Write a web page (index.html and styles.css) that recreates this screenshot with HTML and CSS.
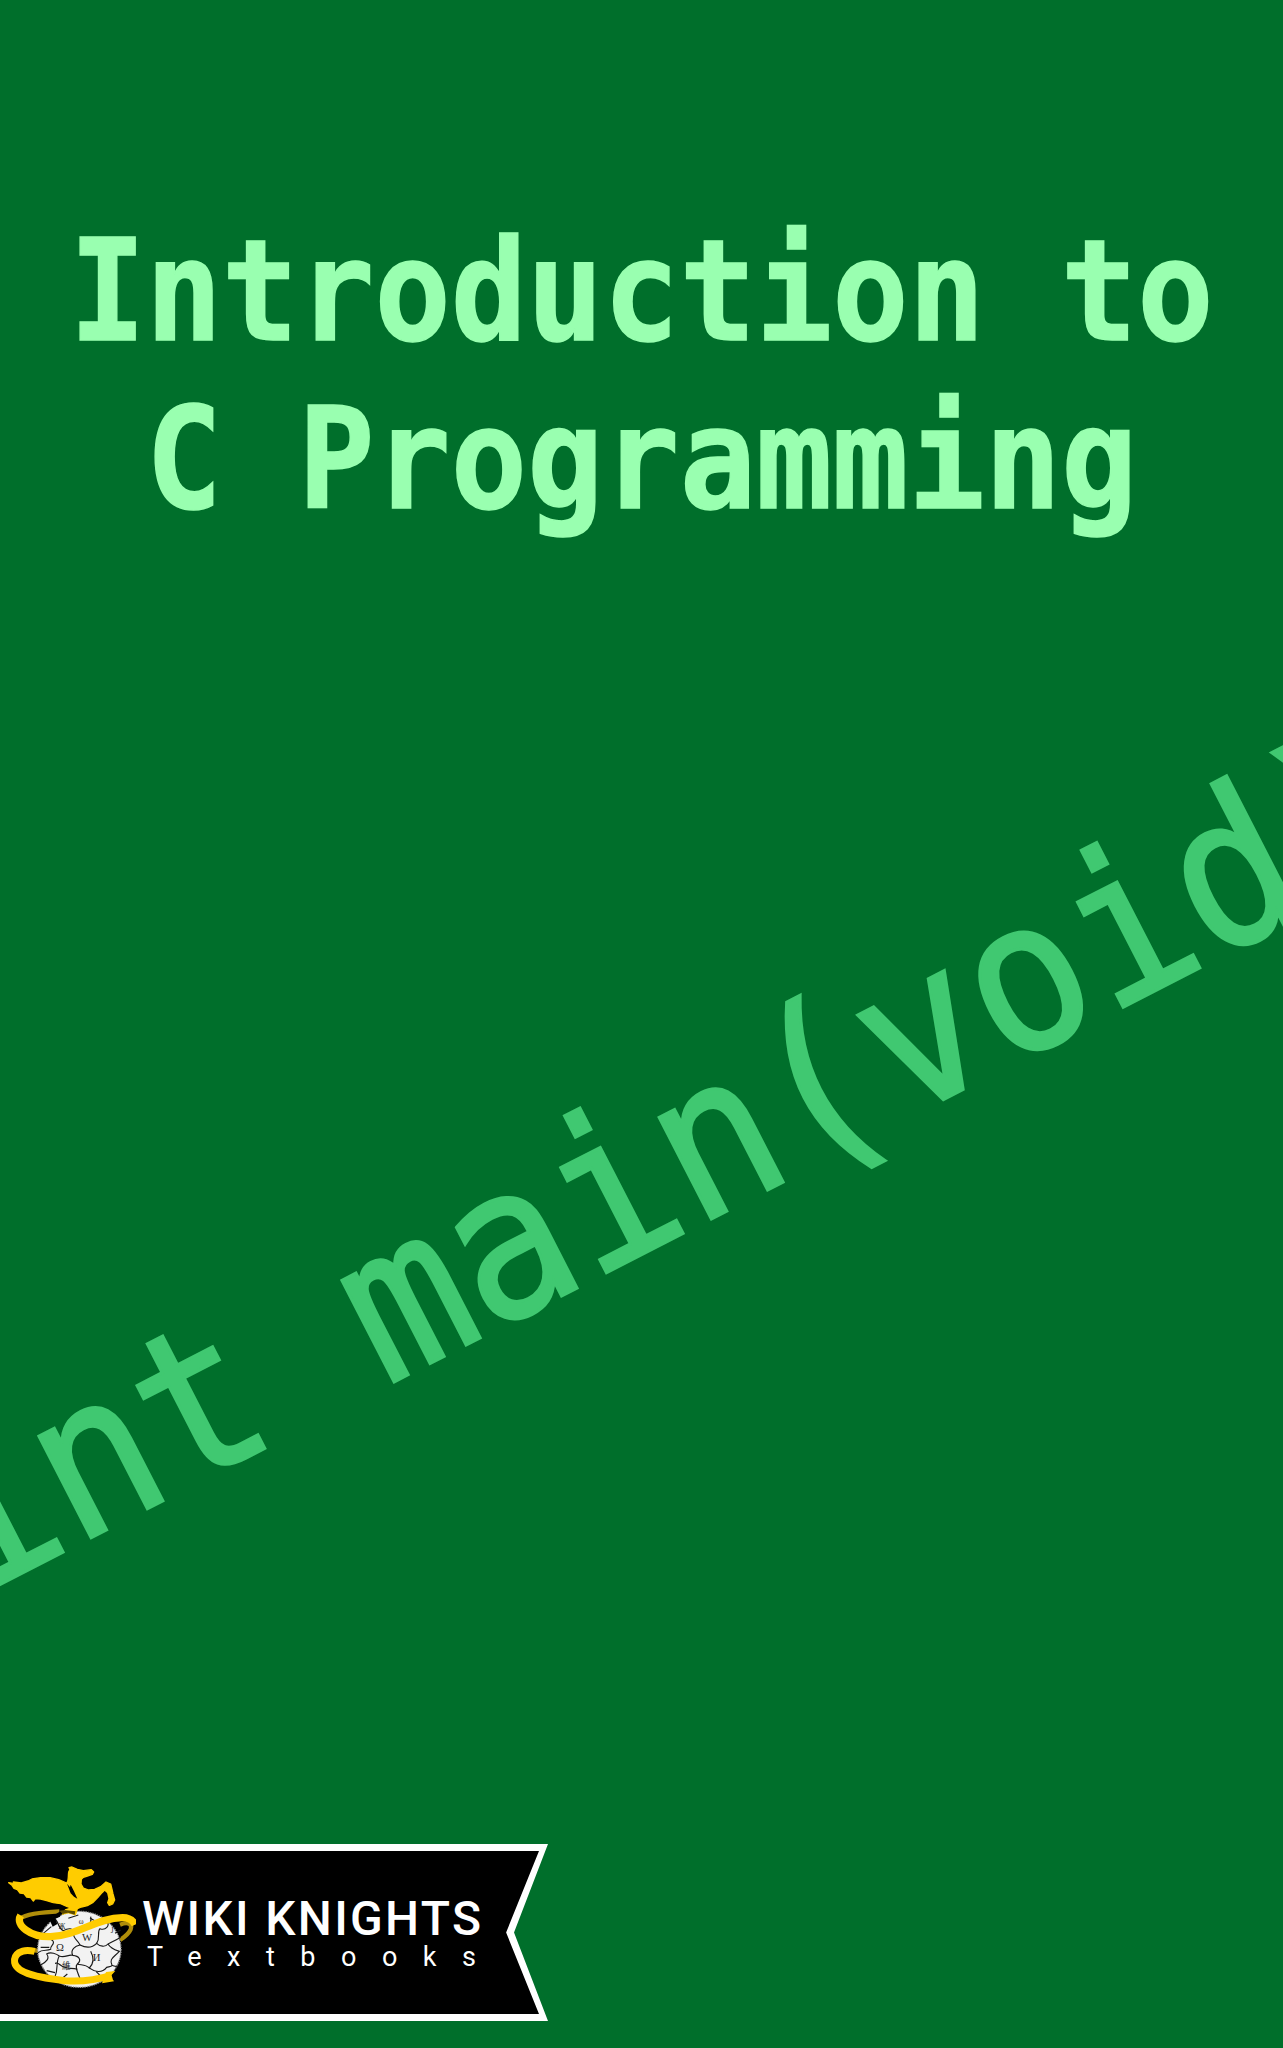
FILE: index.html
```html
<!DOCTYPE html>
<html lang="en">
<head>
<meta charset="utf-8">
<title>Introduction to C Programming</title>
<link rel="stylesheet" href="styles.css">
</head>
<body>
<main class="cover">
  <h1 class="title">Introduction to<br>C Programming</h1>
  <div class="code">int main(void)</div>
  <div class="banner">
    <div class="banner-inner">
      <svg class="logo" viewBox="0 0 408 450" aria-hidden="true">
        <path class="band-back" d="M58 206C80 192 130 186 178 184"/>
        <path class="band-back" d="M360 224C385 214 398 222 392 238C386 252 375 260 360 270"/>
        <path class="band-back" d="M122 304C95 298 68 298 48 312"/>
        <ellipse class="globe" cx="238" cy="298" rx="125" ry="114"/>
        <g class="puzzle">
          <path d="M116 262C135 272 150 262 158 272C168 282 148 288 152 298C140 304 128 296 114 308"/>
          <path d="M122 345C140 335 150 325 140 312C152 304 170 312 178 318C195 325 205 312 218 316C238 318 246 330 232 342C222 350 236 372 242 392"/>
          <path d="M218 316C210 298 226 288 240 285C234 270 216 264 222 250C234 240 250 240 258 226C270 222 276 214 272 200"/>
          <path d="M240 285C262 296 280 290 290 280C300 290 316 292 324 282C340 274 352 268 362 262"/>
          <path d="M324 282C332 296 346 300 358 304C342 322 326 326 336 346C344 350 348 350 352 348"/>
          <path d="M272 304C286 330 276 346 268 354C256 342 242 346 232 342"/>
          <path d="M268 354C285 366 306 370 320 352C328 350 336 350 336 346"/>
          <path d="M158 200C180 214 170 232 190 242C204 234 220 232 222 250"/>
          <path d="M290 280C302 262 290 246 300 236C316 242 332 228 320 212C316 206 306 204 298 208"/>
          <path d="M165 380C176 356 166 338 178 318M165 340C180 336 178 350 196 352C206 358 216 352 232 358"/>
          <path d="M122 292H148M130 250L154 230M270 204L294 218M308 384L288 364M176 394L202 372M205 205L235 195M140 362L165 368M345 250L362 240"/>
        </g>
        <text class="glyph glyph-omega" x="168" y="302">Ω</text>
        <text class="glyph glyph-w" x="246" y="274">W</text>
        <text class="glyph glyph-i" x="278" y="334">И</text>
        <text class="glyph glyph-han" x="186" y="358">維</text>
        <text class="glyph glyph-small" x="332" y="250">J</text>
        <text class="glyph glyph-small" x="236" y="222">ω</text>
        <text class="glyph glyph-small" x="176" y="238">Ж</text>
        <path class="gap" d="M150 212C158 198 170 188 186 182L180 200L166 206L172 222L158 230Z"/>
        <path class="pegasus" d="M26 98L44 101L40 96L64 99L84 93L96 87L122 83L150 83L176 89L200 99C207 92 204 78 206 66L210 58L207 53L216 51L232 58L250 62L274 59L281 66L277 73L262 78L250 82L244 88L243 102L250 114L266 120L284 118L302 110L318 96L332 102L336 118L339 132L344 150L338 162L328 166L323 158L327 146L323 128L314 120L306 128L294 142L278 158L262 167L244 171L232 176L226 194L204 188L188 192L196 180L214 174L202 170L182 161L160 158L140 152L122 147L106 146L100 153L92 143L80 141L72 131L60 129L52 119L42 115L36 106Z"/>
        <path class="pegasus-shade" d="M201 101L210 112L212 104L222 124L232 146L222 140L212 130Z"/>
        <path class="pegasus-dark" d="M178 182L196 180L226 184L224 194L204 188L188 192Z"/>
        <path class="band-front" d="M62 196C44 226 92 262 152 260C235 256 290 204 368 203C386 203 398 210 405 224"/>
        <path class="band-front band-low" d="M104 304C62 294 40 314 44 338C50 370 122 384 195 392C250 396 295 388 335 376"/>
        <path class="band-tail" d="M318 366L346 363L332 378L342 394L306 400Z"/>
      </svg>
      <div class="brand">
        <div class="brand-name">WIKI KNIGHTS</div>
        <div class="brand-sub">Textbooks</div>
      </div>
    </div>
  </div>
</main>
</body>
</html>
```

FILE: styles.css
```css
html, body {
  margin: 0;
  padding: 0;
}

.cover {
  position: relative;
  display: flex;
  flex-direction: column;
  width: 1283px;
  height: 2048px;
  overflow: hidden;
  background: #006f2b;
}

.title {
  margin: 0;
  padding-top: 208px;
  font-family: "DejaVu Sans Mono", monospace;
  font-size: 140px;
  font-weight: 700;
  line-height: 167.5px;
  color: #99ffb0;
  text-align: center;
  white-space: nowrap;
  -webkit-text-stroke: 1.5px #99ffb0;
  transform: scaleX(0.905);
}

.code {
  position: absolute;
  left: -28px;
  top: 1433px;
  height: 200px;
  font-family: "DejaVu Sans Mono", monospace;
  font-size: 193px;
  line-height: 200px;
  color: #40c871;
  white-space: nowrap;
  -webkit-text-stroke: 3px #40c871;
  transform-origin: 0 167px;
  transform: rotate(-27.2deg) scaleY(1.08);
}

.banner {
  width: 548px;
  margin-top: auto;
  margin-bottom: 27px;
  padding: 7px 0;
  background: #fff;
  clip-path: polygon(0 0, 100% 0, 93.8% 50%, 100% 100%, 0 100%);
}

.banner-inner {
  display: flex;
  align-items: flex-start;
  width: 539px;
  height: 163px;
  background: #000;
  clip-path: polygon(0 0, 100% 0, 93.9% 50%, 100% 100%, 0 100%);
}

.logo {
  flex: none;
  width: 136px;
  height: 150px;
  margin-top: -1px;
}

.brand {
  display: flex;
  flex-direction: column;
  margin: 46px 0 0 6px;
  font-family: Roboto, sans-serif;
  color: #fff;
  white-space: nowrap;
}

.brand-name {
  font-size: 48px;
  font-weight: 500;
  line-height: 44px;
  letter-spacing: 2.3px;
}

.brand-sub {
  margin: 1px 0 0 5px;
  font-size: 27px;
  line-height: 30px;
  letter-spacing: 25.5px;
}

.band-back,
.band-front {
  fill: none;
  stroke-linecap: butt;
}

.band-back {
  stroke: #b08e0a;
  stroke-width: 13;
}

.band-front {
  stroke: #fc0;
  stroke-width: 22;
}

.band-low {
  stroke-width: 21;
}

.band-tail {
  fill: #fc0;
}

.globe {
  fill: #f2f2f2;
  stroke: #999;
  stroke-width: 4;
  stroke-dasharray: 4 3;
}

.puzzle path {
  fill: none;
  stroke: #1a1a1a;
  stroke-width: 3.4;
}

.glyph {
  font-family: "Liberation Serif", "Noto Sans CJK TC", serif;
  fill: #222;
}

.glyph-omega,
.glyph-w,
.glyph-i {
  font-size: 32px;
}

.glyph-han {
  font-size: 26px;
}

.glyph-small {
  font-size: 22px;
}

.gap {
  fill: #000;
}

.pegasus {
  fill: #fc0;
  stroke: #fc0;
  stroke-width: 4;
  stroke-linejoin: round;
}

.pegasus-shade {
  fill: #000;
}

.pegasus-dark {
  fill: #5c4a00;
}
```
